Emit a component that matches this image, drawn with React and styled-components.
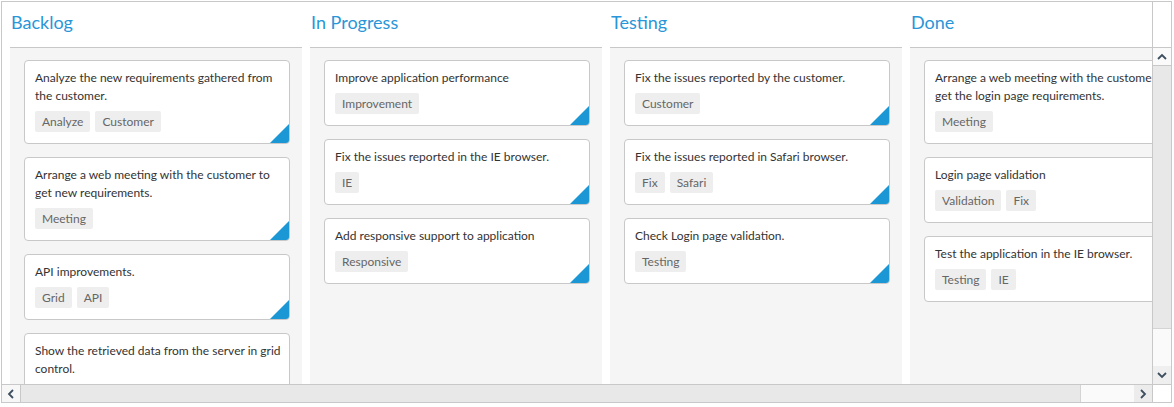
import React from "react";
import styled, { createGlobalStyle } from "styled-components";

const GlobalStyle = createGlobalStyle`
  html, body { margin: 0; padding: 0; background: #fff; }
  body { font-family: "Lato", "Segoe UI", sans-serif; }
  * { box-sizing: border-box; }
`;

const Root = styled.div`
  margin: 1px 0 0 1px;
  width: 1171px;
  height: 402px;
  border: 1px solid #c8c8c8;
  display: grid;
  grid-template-columns: 1150px 19px;
  grid-template-rows: 382px 18px;
  background: #fff;
`;

const Viewport = styled.div`
  overflow: hidden;
  position: relative;
`;

const Board = styled.div`
  display: flex;
  gap: 8px;
  padding-left: 8px;
  height: 100%;
`;

const Column = styled.div`
  flex: 0 0 292px;
  display: flex;
  flex-direction: column;
  min-height: 0;
`;

const Header = styled.div`
  flex: 0 0 45px;
  padding: 10px 0 0 1px;
  font-size: 18px;
  line-height: 1.2;
  color: #2896d8;
`;

const Lane = styled.div`
  flex: 1 1 auto;
  min-height: 0;
  overflow: hidden;
  background: #f5f5f5;
  border-top: 1px solid #c8c8c8;
  padding: 12px 12px 0 14px;
  display: flex;
  flex-direction: column;
  gap: 13px;
`;

const Card = styled.div`
  position: relative;
  flex: 0 0 auto;
  width: 266px;
  background: #fff;
  border: 1px solid #c8c8c8;
  border-radius: 4px;
  padding: 8px 6px 11px 10px;
  overflow: hidden;
`;

const CardText = styled.div`
  font-size: 12px;
  line-height: 18px;
  color: #333;
`;

const Tags = styled.div`
  margin-top: 6px;
  display: flex;
  flex-wrap: wrap;
  gap: 5px;
`;

const Tag = styled.span`
  display: inline-block;
  background: #eeeeee;
  color: #666;
  font-size: 12px;
  line-height: 21px;
  height: 21px;
  padding: 0 7px;
  border-radius: 2px;
`;

const Corner = styled.span`
  position: absolute;
  right: 0;
  bottom: 0;
  width: 19px;
  height: 19px;
  background: #1c97d6;
  clip-path: polygon(100% 0, 100% 100%, 0 100%);
`;

const VScroll = styled.div`
  border-left: 1px solid #c8c8c8;
  display: flex;
  flex-direction: column;
`;

const Gutter = styled.div`
  flex: 0 0 45px;
  background: #fff;
`;

const VBar = styled.div`
  flex: 1;
  border-top: 1px solid #c8c8c8;
  display: flex;
  flex-direction: column;
`;

const ArrowBtn = styled.div`
  flex: 0 0 ${(p) => p.$size}px;
  display: flex;
  align-items: center;
  justify-content: center;
  background: ${(p) => p.$bg};
  ${(p) => (p.$borderBottom ? "border-bottom: 1px solid #c8c8c8;" : "")}
  ${(p) => (p.$borderRight ? "border-right: 1px solid #c8c8c8;" : "")}
`;

const Handle = styled.div`
  flex: 0 0 ${(p) => p.$size}px;
  background: #e8e8e8;
`;

const Track = styled.div`
  flex: ${(p) => (p.$size ? `0 0 ${p.$size}px` : "1")};
  background: #fafafa;
  ${(p) => (p.$vertical ? "border-top: 1px solid #d4d4d4;" : "border-left: 1px solid #d4d4d4;")}
`;

const HScroll = styled.div`
  border-top: 1px solid #c8c8c8;
  display: flex;
`;

const ScrollCorner = styled.div`
  border-left: 1px solid #c8c8c8;
  border-top: 1px solid #c8c8c8;
  background: #fff;
`;

const Chevron = ({ dir }) => {
  const paths = {
    up: "M1 6 L5 2 L9 6",
    down: "M1 2 L5 6 L9 2",
    left: "M6 1 L2 5 L6 9",
    right: "M2 1 L6 5 L2 9",
  };
  const vertical = dir === "up" || dir === "down";
  return (
    <svg
      width={vertical ? 10 : 8}
      height={vertical ? 8 : 10}
      viewBox={vertical ? "0 0 10 8" : "0 0 8 10"}
    >
      <path d={paths[dir]} fill="none" stroke="#3e4e5e" strokeWidth="1.8" />
    </svg>
  );
};

const columns = [
  {
    title: "Backlog",
    cards: [
      { text: "Analyze the new requirements gathered from the customer.", tags: ["Analyze", "Customer"] },
      { text: "Arrange a web meeting with the customer to get new requirements.", tags: ["Meeting"] },
      { text: "API improvements.", tags: ["Grid", "API"] },
      { text: "Show the retrieved data from the server in grid control.", tags: ["Database", "SQL"] },
    ],
  },
  {
    title: "In Progress",
    cards: [
      { text: "Improve application performance", tags: ["Improvement"] },
      { text: "Fix the issues reported in the IE browser.", tags: ["IE"] },
      { text: "Add responsive support to application", tags: ["Responsive"] },
    ],
  },
  {
    title: "Testing",
    cards: [
      { text: "Fix the issues reported by the customer.", tags: ["Customer"] },
      { text: "Fix the issues reported in Safari browser.", tags: ["Fix", "Safari"] },
      { text: "Check Login page validation.", tags: ["Testing"] },
    ],
  },
  {
    title: "Done",
    cards: [
      { text: "Arrange a web meeting with the customer to get the login page requirements.", tags: ["Meeting"] },
      { text: "Login page validation", tags: ["Validation", "Fix"] },
      { text: "Test the application in the IE browser.", tags: ["Testing", "IE"] },
    ],
  },
];

export default function App() {
  return (
    <>
      <GlobalStyle />
      <Root>
        <Viewport>
          <Board>
            {columns.map((col) => (
              <Column key={col.title}>
                <Header>{col.title}</Header>
                <Lane>
                  {col.cards.map((c, i) => (
                    <Card key={i}>
                      <CardText>{c.text}</CardText>
                      <Tags>
                        {c.tags.map((t) => (
                          <Tag key={t}>{t}</Tag>
                        ))}
                      </Tags>
                      <Corner />
                    </Card>
                  ))}
                </Lane>
              </Column>
            ))}
          </Board>
        </Viewport>
        <VScroll>
          <Gutter />
          <VBar>
            <ArrowBtn $size={18} $bg="#fafafa" $borderBottom>
              <Chevron dir="up" />
            </ArrowBtn>
            <Handle $size={262} />
            <Track $vertical />
            <ArrowBtn $size={18} $bg="#efefef">
              <Chevron dir="down" />
            </ArrowBtn>
          </VBar>
        </VScroll>
        <HScroll>
          <ArrowBtn $size={19} $bg="#f7f7f7" $borderRight>
            <Chevron dir="left" />
          </ArrowBtn>
          <Handle $size={1059} />
          <Track $size={54} />
          <ArrowBtn $size={18} $bg="#ececec">
            <Chevron dir="right" />
          </ArrowBtn>
        </HScroll>
        <ScrollCorner />
      </Root>
    </>
  );
}
